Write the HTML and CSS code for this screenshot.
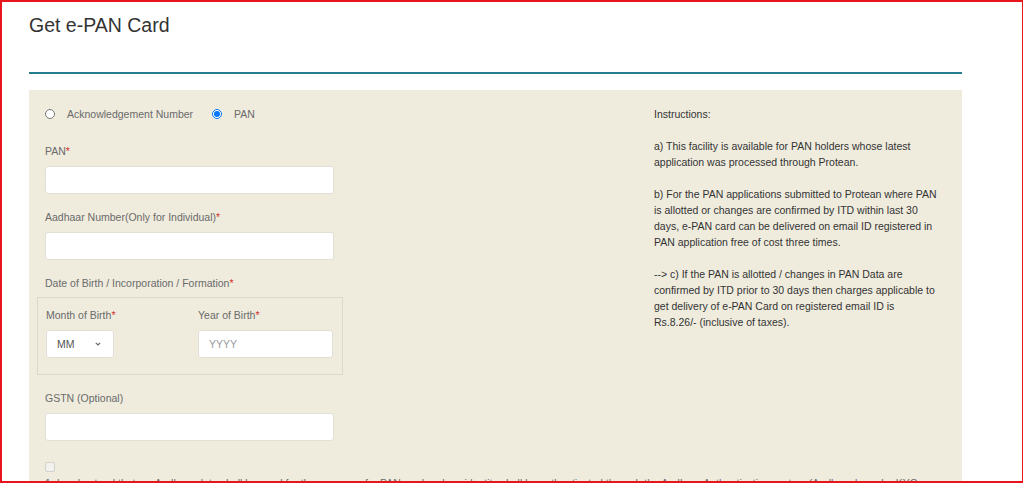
FILE: index.html
```html
<!DOCTYPE html>
<html lang="en">
  <head>
    <meta charset="UTF-8" />
    <meta name="viewport" content="width=device-width, initial-scale=1.0" />
    <title>Get e-PAN Card</title>
    <link rel="stylesheet" href="styles.css">
  </head>
  <body>
    <div class="page">
      <h1 class="title">Get e-PAN Card</h1>

      <div class="panel">
        <div class="panel-row">
          <form class="form-col">
            <div class="radio-row">
              <label class="radio"><input type="radio" name="mode" /> Acknowledgement Number</label>
              <label class="radio"><input type="radio" name="mode" checked /> PAN</label>
            </div>

            <div class="group">
              <label class="lbl">PAN<span class="req">*</span></label>
              <input type="text" class="field" />
            </div>

            <div class="group">
              <label class="lbl">Aadhaar Number(Only for Individual)<span class="req">*</span></label>
              <input type="text" class="field" />
            </div>

            <div class="group">
              <label class="lbl dob-lbl">Date of Birth / Incorporation / Formation<span class="req">*</span></label>
              <div class="dob-box">
                <div>
                  <label class="lbl">Month of Birth<span class="req">*</span></label>
                  <div class="select">
                    <span>MM</span>
                    <svg width="8" height="6" viewBox="0 0 8 6"><path d="M1.8 1.8 L4 4 L6.2 1.8" fill="none" stroke="#666" stroke-width="1.1" /></svg>
                  </div>
                </div>
                <div>
                  <label class="lbl">Year of Birth<span class="req">*</span></label>
                  <input type="text" class="field year" placeholder="YYYY" />
                </div>
              </div>
            </div>

            <div class="group gstn">
              <label class="lbl">GSTN (Optional)</label>
              <input type="text" class="field" />
            </div>
          </form>

          <div class="info-col">
            Instructions:<br><br>
            a) This facility is available for PAN holders whose latest application was processed through Protean.<br><br>
            b) For the PAN applications submitted to Protean where PAN is allotted or changes are confirmed by ITD within last 30 days, e-PAN card can be delivered on email ID registered in PAN application free of cost three times.<br><br>
            --&gt; c) If the PAN is allotted / changes in PAN Data are confirmed by ITD prior to 30 days then charges applicable to get delivery of e-PAN Card on registered email ID is Rs.8.26/- (inclusive of taxes).
          </div>
        </div>

        <div class="consent">
          <input type="checkbox" class="check" />
          <p class="consent-text">1. I understand that my Aadhaar data shall be used for the purpose of e-PAN card and my identity shall be authenticated through the Aadhaar Authentication system (Aadhaar based e-KYC</p>
        </div>
      </div>
    </div>
    <div class="frame"></div>
  </body>
</html>
```

FILE: styles.css
```css
:root {
  --teal: #237f8e;
  --panel: #efecde;
  --label: #6a6a6a;
  --text: #333;
  --req: #d2322d;
}

body {
  margin: 0;
  background: #fff;
  font-family: "Liberation Sans", Arial, sans-serif;
  font-size: 10.5px;
  color: var(--text);
  overflow: hidden;
}

.page {
  width: 933px;
  padding-left: 29px;
}

.title {
  margin: 0 0 16px;
  padding: 14px 0 36px;
  font-size: 19.5px;
  line-height: 22px;
  font-weight: 400;
  color: #333;
  border-bottom: 2px solid var(--teal);
}

.panel {
  background: var(--panel);
  padding: 16px 0 40px 16px;
}

.panel-row {
  display: flex;
}

.form-col {
  width: 289px;
  margin: 0;
}

.radio-row {
  display: flex;
  gap: 19px;
  height: 16px;
  align-items: center;
  color: var(--label);
  margin-bottom: 21px;
}
.radio {
  display: flex;
  align-items: center;
  gap: 12px;
  line-height: 16px;
}
.radio input {
  margin: 0;
  width: 10px;
  height: 10px;
}

.group + .group {
  margin-top: 15px;
}

.lbl {
  display: block;
  line-height: 16px;
  color: var(--label);
  margin-bottom: 7px;
}
.dob-lbl {
  margin-bottom: 6px;
}
.req {
  color: var(--req);
}

.field {
  display: block;
  box-sizing: border-box;
  width: 289px;
  height: 28px;
  margin: 0;
  padding: 0 10px;
  border: 1px solid #e2e0d6;
  border-radius: 3px;
  background: #fff;
  font-family: inherit;
  font-size: 10.5px;
  color: #555;
  outline: none;
}
.field::placeholder {
  color: #9a9a9a;
}

.dob-box {
  display: grid;
  grid-template-columns: 152px 135px;
  width: 306px;
  box-sizing: border-box;
  margin-left: -8px;
  padding: 9px 9px 16px 8px;
  border: 1px solid #dcd9cb;
}
.field.year {
  width: 135px;
}

.select {
  display: flex;
  align-items: center;
  justify-content: space-between;
  box-sizing: border-box;
  width: 68px;
  height: 28px;
  padding: 0 11px 0 10px;
  background: #fff;
  border: 1px solid #e2e0d6;
  border-radius: 3px;
  color: #555;
}

.info-col {
  width: 283px;
  margin-left: 320px;
  line-height: 16px;
  color: #333;
}

.consent {
  margin-top: 21px;
}
.check {
  appearance: none;
  display: block;
  width: 10px;
  height: 10px;
  margin: 0;
  border: 1px solid #d2d0c8;
  border-radius: 2px;
  background: #f3f2ee;
}
.consent-text {
  margin: 3px 0 0;
  line-height: 16px;
  color: var(--label);
  white-space: nowrap;
}

.frame {
  position: fixed;
  top: 0;
  left: 0;
  width: 1023px;
  height: 483px;
  box-sizing: border-box;
  border: 2px solid #e8161b;
  border-right-width: 1px;
  pointer-events: none;
}
```
